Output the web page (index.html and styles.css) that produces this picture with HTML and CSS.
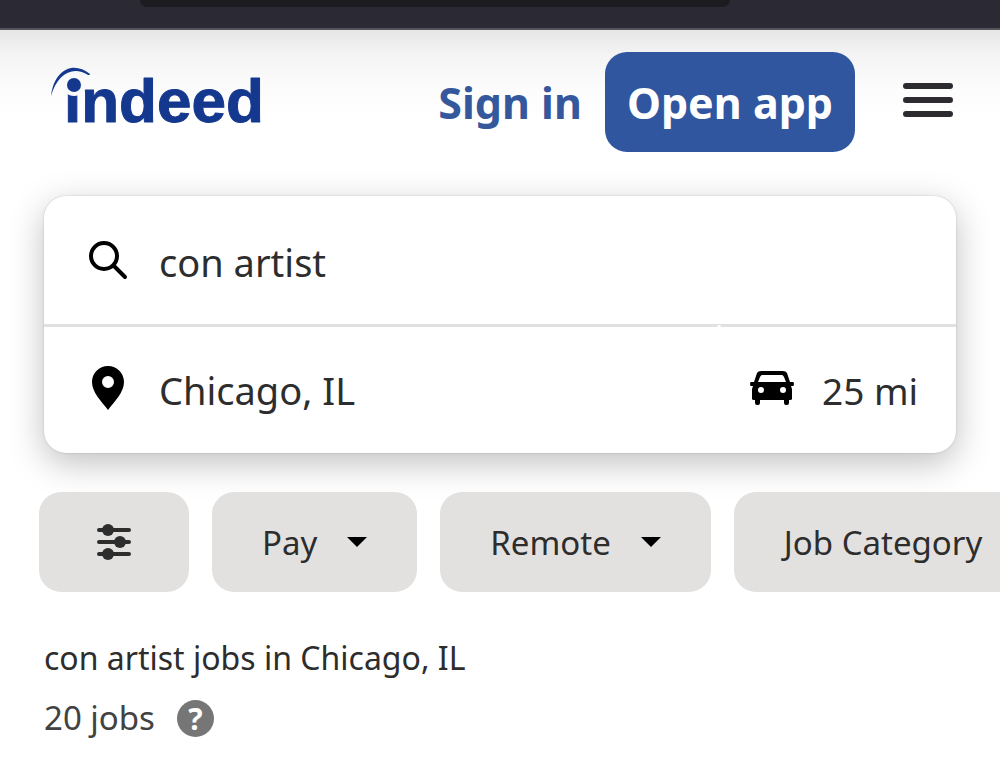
FILE: index.html
```html
<!DOCTYPE html>
<html lang="en">
<head>
    <meta charset="UTF-8">
    <meta name="viewport" content="width=device-width, initial-scale=1.0">
    <title>con artist jobs in Chicago, IL</title>
    <link rel="stylesheet" href="styles.css">
</head>
<body>
    <div class="topbar">
        <div class="addressBar"></div>
    </div>

    <header class="header">
        <a href="#" class="logo">
            <svg width="220" height="76" viewBox="50 64 220 76">
                <text x="64" y="122" class="logoText">indeed</text>
                <circle cx="74" cy="85" r="11" class="logoGap"/>
                <circle cx="74" cy="85" r="7" class="logoMark"/>
                <path d="M51 96C54 70 73 60 90 74C90 75 89 75 88 75C73 65 57 74 51 96Z" class="logoMark"/>
            </svg>
        </a>
        <a href="#" class="signIn">Sign in</a>
        <button type="button" class="openApp">Open app</button>
        <button type="button" class="menu" aria-label="Menu">
            <svg width="50" height="34" viewBox="0 0 50 34">
                <path d="M3 3H47M3 17H47M3 31H47" stroke="#2d2a30" stroke-width="6" stroke-linecap="round"/>
            </svg>
        </button>
    </header>

    <main>
        <form class="search">
            <div class="row rowWhat">
                <label for="what" class="icon" aria-label="Job title">
                    <svg width="44" height="44" viewBox="0 0 44 44">
                        <circle cx="18" cy="16" r="13" fill="none" stroke="#000" stroke-width="4"/>
                        <path d="M28 26L39 37" stroke="#000" stroke-width="4" stroke-linecap="round"/>
                    </svg>
                </label>
                <input type="text" id="what" class="field" value="con artist">
            </div>
            <div class="row rowWhere">
                <label for="where" class="icon" aria-label="Location">
                    <svg width="44" height="48" viewBox="0 0 44 48">
                        <path fill-rule="evenodd" d="M22 0C13 0 6 7 6 16C6 26 15 35 22 44C29 35 38 26 38 16C38 7 31 0 22 0ZM22 10A6 6 0 1 1 22 22A6 6 0 1 1 22 10Z"/>
                    </svg>
                </label>
                <input type="text" id="where" class="field" value="Chicago, IL">
                <div class="radius">
                    <label for="distance" class="icon" aria-label="Distance">
                        <svg width="44" height="40" viewBox="0 0 44 40">
                            <path fill-rule="evenodd" d="M11 1H33Q36 1 37 3L40 12H43Q44 12 44 14Q44 16 43 16H41L42 19V29Q42 30 40 30H39V33Q39 35 37 35H36Q34 35 34 33V30H10V33Q10 35 8 35H7Q5 35 5 33V30H4Q2 30 2 29V19L3 16H1Q0 16 0 14Q0 12 1 12H4L7 3Q8 1 11 1ZM12 5Q11 5 10 7L8 12H36L34 7Q33 5 32 5ZM11 17A3 3 0 1 0 11 23A3 3 0 1 0 11 17ZM33 17A3 3 0 1 0 33 23A3 3 0 1 0 33 17Z"/>
                        </svg>
                    </label>
                    <select id="distance" class="distance">
                        <option>25 mi</option>
                    </select>
                </div>
            </div>
        </form>

        <div class="filters">
            <button type="button" class="filter" aria-label="All filters">
                <svg width="50" height="40" viewBox="0 0 50 40">
                    <path d="M10 8H40M10 20H40M10 32H40" stroke="#2d2d2d" stroke-width="4" stroke-linecap="round"/>
                    <g fill="#2d2d2d">
                        <circle cx="19" cy="8" r="6"/>
                        <circle cx="31" cy="20" r="6"/>
                        <circle cx="19" cy="32" r="6"/>
                    </g>
                </svg>
            </button>
            <button type="button" class="filter">Pay <span class="caret"></span></button>
            <button type="button" class="filter">Remote <span class="caret"></span></button>
            <button type="button" class="filter">Job Category <span class="caret"></span></button>
        </div>

        <section class="results">
            <h1 class="title">con artist jobs in Chicago, IL</h1>
            <div class="count">
                <span>20 jobs</span>
                <button type="button" class="help">?</button>
            </div>
        </section>
    </main>
</body>
</html>
```
FILE: styles.css
```css
* {
    box-sizing: border-box;
}
body {
    margin: 0;
    overflow-x: hidden;
    background-color: white;
    font-family: "Noto Sans", sans-serif;
    color: #2d2d2d;
}
button, input, select {
    font-family: inherit;
    color: inherit;
    padding: 0;
    border: none;
    background: none;
}
svg {
    display: block;
}
.topbar {
    height: 30px;
    background-color: #2b2933;
    border-bottom: 2px solid #57555c;
}
.addressBar {
    width: 59%;
    height: 7px;
    margin-left: 14%;
    border-radius: 0 0 14px 14px;
    background-color: #1c1b20;
}
.header {
    display: flex;
    align-items: center;
    padding: 22px 47px 44px 50px;
    background: linear-gradient(#e6e6e6, #f4f4f4 25px, #fcfcfc 60px, white 90px);
}
.logo {
    margin-right: auto;
}
.logoText {
    font-family: "Liberation Sans", sans-serif;
    font-size: 62px;
    font-weight: bold;
    fill: #15388f;
    stroke: #15388f;
    stroke-width: 1px;
    stroke-linejoin: round;
}
.logoMark {
    fill: #15388f;
}
.logoGap {
    fill: #fafafa;
}
.signIn {
    margin-right: 23px;
    font-size: 43px;
    font-weight: bold;
    color: #35589c;
    text-decoration: none;
}
.openApp {
    height: 100px;
    padding: 0 22px;
    border-radius: 22px;
    font-size: 43px;
    font-weight: bold;
    color: white;
    background-color: #3156a0;
}
.menu {
    margin-left: 48px;
    padding-bottom: 5px;
}
.search {
    margin: 0 44px;
    border-radius: 22px;
    background-color: white;
    box-shadow: 0 0 2px rgba(0, 0, 0, 0.2), 0 10px 34px rgba(0, 0, 0, 0.25);
}
.row {
    display: flex;
    align-items: center;
    height: 128px;
    padding: 0 37px 0 42px;
}
.rowWhat {
    padding-top: 3px;
}
.rowWhere {
    height: 129px;
    border-top: 3px solid #e0e0e0;
}
.field {
    flex: 1;
    min-width: 0;
    margin-left: 29px;
    font-size: 38px;
}
.radius {
    position: relative;
    display: flex;
    align-items: center;
    gap: 28px;
    padding-left: 31px;
}
/* small notch in the divider where the two fields meet */
.radius::before {
    content: "";
    position: absolute;
    top: -40px;
    left: -2px;
    width: 4px;
    height: 4px;
    border-radius: 50%;
    background-color: white;
}
.distance {
    appearance: none;
    font-size: 37px;
}
.filters {
    display: flex;
    gap: 23px;
    padding: 39px 0 0 39px;
    overflow: hidden;
}
.filter {
    display: flex;
    flex: none;
    align-items: center;
    gap: 30px;
    height: 100px;
    padding: 0 50px;
    border-radius: 22px;
    font-size: 33px;
    background-color: #e3e1e0;
}
.caret {
    border-top: 10px solid black;
    border-left: 10px solid transparent;
    border-right: 10px solid transparent;
}
.results {
    padding: 42px 44px 0;
}
.title {
    margin: 0;
    font-size: 32px;
    font-weight: normal;
    line-height: 48px;
}
.count {
    display: flex;
    align-items: center;
    gap: 22px;
    margin-top: 8px;
    font-size: 33px;
    line-height: 56px;
    color: #424242;
}
.help {
    width: 37px;
    height: 37px;
    border-radius: 50%;
    font-size: 30px;
    font-weight: bold;
    line-height: 37px;
    color: white;
    background-color: #767676;
}
```
